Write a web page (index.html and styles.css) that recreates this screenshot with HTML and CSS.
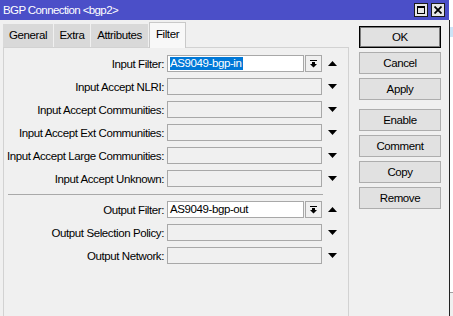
FILE: index.html
```html
<!DOCTYPE html>
<html>
<head>
<meta charset="utf-8">
<link rel="stylesheet" href="styles.css">
</head>
<body>
<div class="screen">
  <div class="window">
    <div class="titlebar">
      <span class="title">BGP Connection &lt;bgp2&gt;</span>
      <div class="tb-btns">
        <span class="tb-btn"><svg width="8" height="8" viewBox="0 0 8 8"><path d="M0 0h8v8H0z M1 2v5h6V2z" fill="#000" fill-rule="evenodd"/></svg></span>
        <span class="tb-btn"><svg width="8" height="8" viewBox="0 0 8 8"><path d="M0.5 0.5L7.5 7.5M7.5 0.5L0.5 7.5" stroke="#000" stroke-width="1.8"/></svg></span>
      </div>
    </div>
    <div class="wbody">
      <div class="left">
        <div class="tabs">
          <div class="tab t-general">General</div>
          <div class="tab t-extra">Extra</div>
          <div class="tab t-attr">Attributes</div>
          <div class="tab t-filter active">Filter</div>
        </div>
        <div class="panel">
          <div class="form">
            <div class="row">
              <span class="label">Input Filter:</span>
              <div class="combo">
                <div class="input"><span class="sel">AS9049-bgp-in</span></div>
                <span class="ddbtn"><svg width="7" height="8" viewBox="0 0 7 8"><path d="M0 0h7v1H0z M2 2h3v2h2L3.5 7.5 0 4h2z" fill="#000"/></svg></span>
              </div>
              <svg class="arrow" width="9" height="5" viewBox="0 0 9 5"><path d="M0 5h9L4.5 0z" fill="#000"/></svg>
            </div>
            <div class="row">
              <span class="label">Input Accept NLRI:</span>
              <div class="field"></div>
              <svg class="arrow" width="9" height="5" viewBox="0 0 9 5"><path d="M0 0h9L4.5 5z" fill="#000"/></svg>
            </div>
            <div class="row">
              <span class="label">Input Accept Communities:</span>
              <div class="field"></div>
              <svg class="arrow" width="9" height="5" viewBox="0 0 9 5"><path d="M0 0h9L4.5 5z" fill="#000"/></svg>
            </div>
            <div class="row">
              <span class="label">Input Accept Ext Communities:</span>
              <div class="field"></div>
              <svg class="arrow" width="9" height="5" viewBox="0 0 9 5"><path d="M0 0h9L4.5 5z" fill="#000"/></svg>
            </div>
            <div class="row">
              <span class="label">Input Accept Large Communities:</span>
              <div class="field"></div>
              <svg class="arrow" width="9" height="5" viewBox="0 0 9 5"><path d="M0 0h9L4.5 5z" fill="#000"/></svg>
            </div>
            <div class="row">
              <span class="label">Input Accept Unknown:</span>
              <div class="field"></div>
              <svg class="arrow" width="9" height="5" viewBox="0 0 9 5"><path d="M0 0h9L4.5 5z" fill="#000"/></svg>
            </div>
          </div>
          <div class="sep"></div>
          <div class="form">
            <div class="row">
              <span class="label">Output Filter:</span>
              <div class="combo">
                <div class="input">AS9049-bgp-out</div>
                <span class="ddbtn"><svg width="7" height="8" viewBox="0 0 7 8"><path d="M0 0h7v1H0z M2 2h3v2h2L3.5 7.5 0 4h2z" fill="#000"/></svg></span>
              </div>
              <svg class="arrow" width="9" height="5" viewBox="0 0 9 5"><path d="M0 5h9L4.5 0z" fill="#000"/></svg>
            </div>
            <div class="row">
              <span class="label">Output Selection Policy:</span>
              <div class="field"></div>
              <svg class="arrow" width="9" height="5" viewBox="0 0 9 5"><path d="M0 0h9L4.5 5z" fill="#000"/></svg>
            </div>
            <div class="row">
              <span class="label">Output Network:</span>
              <div class="field"></div>
              <svg class="arrow" width="9" height="5" viewBox="0 0 9 5"><path d="M0 0h9L4.5 5z" fill="#000"/></svg>
            </div>
          </div>
        </div>
      </div>
      <div class="buttons">
        <div class="btn default">OK</div>
        <div class="btn">Cancel</div>
        <div class="btn">Apply</div>
        <div class="btn group">Enable</div>
        <div class="btn">Comment</div>
        <div class="btn">Copy</div>
        <div class="btn">Remove</div>
      </div>
    </div>
  </div>
  <div class="strip">
    <div class="strip-top"></div>
    <div class="strip-body">
      <div class="strip-white1"></div>
      <div class="strip-blue"></div>
      <div class="strip-white2"></div>
      <div class="strip-gray"></div>
    </div>
  </div>
</div>
</body>
</html>
```
FILE: styles.css
```css
html, body {
  margin: 0;
  padding: 0;
  height: 316px;
  overflow: hidden;
}
body {
  font-family: "Liberation Sans", Arial, sans-serif;
  font-size: 11.5px;
  letter-spacing: -0.4px;
  color: #000;
  background: #f0f0f0;
}
.screen {
  display: flex;
  width: 453px;
  height: 316px;
}
.window {
  width: 449px;
  display: flex;
  flex-direction: column;
  background: #f0f0f0;
}
.titlebar {
  height: 20px;
  flex: none;
  background: #4b4fc8;
  color: #fff;
  display: flex;
  align-items: center;
  justify-content: space-between;
  padding: 0 4px 0 3px;
}
.title {
  letter-spacing: -0.6px;
  font-size: 11.5px;
}
.tb-btns {
  display: flex;
  gap: 3px;
}
.tb-btn {
  width: 12px;
  height: 12px;
  border: 1px solid #1a1a1a;
  background: #e6e6e6;
  display: flex;
  align-items: center;
  justify-content: center;
}
.wbody {
  flex: 1;
  display: flex;
}
.left {
  width: 349px;
  display: flex;
  flex-direction: column;
}
.tabs {
  height: 27px;
  flex: none;
  display: flex;
  align-items: flex-end;
  padding-left: 3px;
  gap: 1px;
  position: relative;
  z-index: 1;
}
.tab {
  box-sizing: border-box;
  height: 23px;
  line-height: 23px;
  background: #d9d9d9;
  text-align: center;
}
.t-general { width: 50px; }
.t-extra { width: 36px; }
.t-attr { width: 57px; }
.t-filter { width: 37px; }
.tab.active {
  height: 26px;
  line-height: 22px;
  background: #f8f8f8;
  border: 1px solid #c9c9c9;
  border-bottom: none;
  margin-bottom: -1px;
}
.panel {
  flex: 1;
  margin-left: 3px;
  width: 346px;
  box-sizing: border-box;
  border: 1px solid #d2d2d2;
  border-bottom: none;
  padding-top: 7px;
}
.form {
  display: flex;
  flex-direction: column;
  gap: 6px;
}
.row {
  display: flex;
  align-items: center;
  height: 17px;
}
.label {
  width: 160px;
  text-align: right;
  white-space: nowrap;
  margin-right: 3px;
}
.field {
  width: 155px;
  height: 17px;
  box-sizing: border-box;
  border: 1px solid #a8a8a8;
  background: #f0f0f0;
}
.combo {
  width: 155px;
  height: 17px;
  display: flex;
  gap: 1px;
}
.input {
  width: 137px;
  height: 17px;
  box-sizing: border-box;
  border: 1px solid #a8a8a8;
  background: #fff;
  padding-left: 2px;
  line-height: 15px;
  white-space: nowrap;
}
.sel {
  background: #0078d7;
  color: #fff;
  display: inline-block;
  line-height: 13px;
  padding-right: 1px;
}
.ddbtn {
  width: 17px;
  height: 17px;
  box-sizing: border-box;
  border: 1px solid #a8a8a8;
  background: #f0f0f0;
  display: flex;
  align-items: center;
  justify-content: center;
}
.arrow {
  margin-left: 6px;
  display: block;
}
.sep {
  margin: 7px 0 6px 4px;
  width: 315px;
  height: 1px;
  background: #a9a9a9;
}
.buttons {
  width: 100px;
  box-sizing: border-box;
  padding: 6px 0 0 10px;
  display: flex;
  flex-direction: column;
  gap: 4px;
}
.btn {
  width: 82px;
  height: 22px;
  box-sizing: border-box;
  border: 1px solid #adadad;
  background: #e1e1e1;
  text-align: center;
  line-height: 20px;
}
.btn.default {
  border-color: #000;
  box-shadow: inset 0 0 0 1px rgba(0, 0, 0, 0.45);
}
.btn.group {
  margin-top: 5px;
}
.strip {
  width: 4px;
  display: flex;
  flex-direction: column;
  background: #fff;
}
.strip-top {
  height: 20px;
}
.strip-body {
  flex: 1;
  border-left: 1px solid #222;
  display: flex;
  flex-direction: column;
}
.strip-white1 { height: 7px; }
.strip-blue { height: 10px; background: #cce4f7; }
.strip-white2 { height: 255px; }
.strip-gray { flex: 1; border-top: 1px solid #a0a0a0; background: #f0f0f0; }
```
